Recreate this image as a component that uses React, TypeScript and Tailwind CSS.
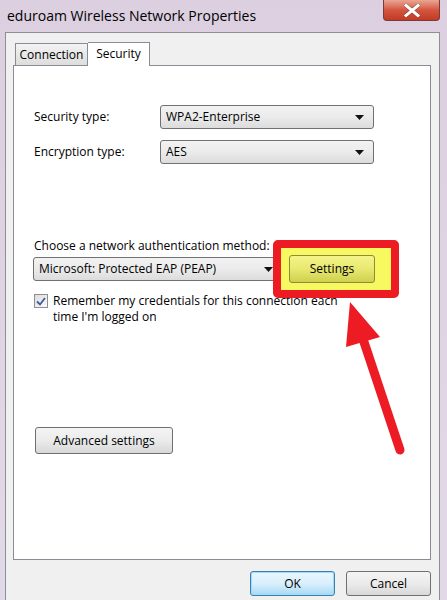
import React from "react";

const font = { fontFamily: '"Open Sans", "Noto Sans", sans-serif' };

function Combo({ value, className }: { value: string; className: string }) {
  return (
    <div
      className={`flex items-center justify-between rounded-[3px] border border-[#707070] bg-gradient-to-b from-[#f2f2f2] via-[#ebebeb] to-[#dcdcdc] pl-[5px] pr-[9px] text-[12px] text-black ${className}`}
    >
      <span className="leading-none">{value}</span>
      <svg width="9" height="5" viewBox="0 0 9 5">
        <path d="M0 0h9L4.5 5z" fill="#111" />
      </svg>
    </div>
  );
}

function Btn({ label, className }: { label: string; className: string }) {
  return (
    <div
      className={`flex items-center justify-center rounded-[3px] border border-[#707070] bg-gradient-to-b from-[#f4f4f4] via-[#ebebeb] to-[#d8d8d8] text-[12px] text-black ${className}`}
    >
      {label}
    </div>
  );
}

export default function App() {
  return (
    <div
      className="relative flex h-[600px] w-[447px] flex-col overflow-hidden bg-gradient-to-b from-[#dccfe0] to-[#e2d9e8]"
      style={font}
    >
      {/* TITLE BAR */}
      <div className="flex h-[32px] shrink-0 items-start justify-between">
        <span className="pl-[7px] pt-[6px] text-[14px] leading-[20px] text-black">
          eduroam Wireless Network Properties
        </span>
        <div className="mr-[7px] flex h-[21px] w-[57px] items-center justify-center rounded-b-[4px] border border-t-0 border-[#7a3a3a] bg-gradient-to-b from-[#e9a595] via-[#d4553f] to-[#c23a24]">
          <svg width="16" height="13" viewBox="0 0 16 13">
            <path d="M2 1.5l12 10M14 1.5l-12 10" stroke="#4a2020" strokeWidth="4.2" strokeLinecap="square" opacity="0.5" />
            <path d="M2 1.5l12 10M14 1.5l-12 10" stroke="#fff" strokeWidth="3" strokeLinecap="square" />
          </svg>
        </div>
      </div>

      {/* CLIENT AREA */}
      <div className="ml-[5px] mr-[7px] flex flex-1 flex-col border-l border-r border-t border-[#8e8e96] bg-[#f0f0f0] px-[7px]">
        {/* TABS */}
        <div className="relative z-10 mt-[9px] flex h-[23px] items-end pl-[2px]">
          <div className="flex h-[22px] w-[73px] items-center justify-center border border-b-0 border-[#898c95] bg-gradient-to-b from-[#f3f3f3] to-[#dddddd] text-[12px] text-black">
            Connection
          </div>
          <div className="-mb-px flex h-[24px] w-[62px] items-start justify-center border border-b-0 border-l-0 border-[#898c95] bg-white pt-[2px] text-[12px] text-black">
            Security
          </div>
        </div>

        {/* PANEL */}
        <div className="flex h-[495px] w-[418px] flex-col border border-[#898c95] bg-white pl-[20px] pt-[39px] text-[12px] text-black">
          <div className="flex items-center">
            <span className="w-[126px]">Security type:</span>
            <Combo value="WPA2-Enterprise" className="h-[24px] w-[214px]" />
          </div>
          <div className="mt-[11px] flex items-center">
            <span className="w-[126px]">Encryption type:</span>
            <Combo value="AES" className="h-[24px] w-[214px]" />
          </div>

          <div className="mt-[74px] leading-[16px]">Choose a network authentication method:</div>
          <div className="mt-[3px] flex items-center">
            <Combo value="Microsoft: Protected EAP (PEAP)" className="-ml-px h-[24px] w-[250px]" />
          </div>
          <div className="mt-[12px] flex items-start">
            <div className="mt-[1px] flex h-[14px] w-[14px] shrink-0 items-center justify-center border border-[#8f8f8f] bg-gradient-to-br from-[#dcdcdc] to-[#fafafa]">
              <svg width="10" height="9" viewBox="0 0 10 9">
                <path d="M1 4.5l3 3L9 1" stroke="#3c5d9b" strokeWidth="1.8" fill="none" />
              </svg>
            </div>
            <div className="ml-[5px] leading-[16px]">
              Remember my credentials for this connection each
              <br />
              time I'm logged on
            </div>
          </div>

          <Btn label="Advanced settings" className="ml-px mt-[102px] h-[27px] w-[138px]" />
        </div>

        {/* FOOTER BUTTONS */}
        <div className="flex justify-end gap-[11px] pr-[1px] pt-[11px]">
          <div className="flex h-[25px] w-[85px] items-center justify-center rounded-[3px] border border-[#3c7fb1] bg-gradient-to-b from-[#eaf6fd] via-[#d9f0fc] to-[#a7d9f5] text-[12px] text-black shadow-[inset_0_0_0_1px_#9fdcf8]">
            OK
          </div>
          <Btn label="Cancel" className="h-[25px] w-[85px]" />
        </div>
      </div>

      {/* HIGHLIGHT BOX */}
      <div className="absolute left-[273px] top-[240px] flex h-[58px] w-[126px] items-center justify-start rounded-[5px] border-[8px] border-[#ed1c24] bg-[#f8f860] pl-[8px]">
        <div className="flex h-[28px] w-[86px] items-center justify-center rounded-[3px] border border-[#8c8c3c] bg-gradient-to-b from-[#f4f48a] via-[#e8e870] to-[#cfd04e] text-[12px] text-black">
          Settings
        </div>
      </div>

      {/* ARROW */}
      <svg className="pointer-events-none absolute left-0 top-0" width="447" height="600">
        <line x1="400" y1="450" x2="364" y2="342" stroke="#ed1c24" strokeWidth="9" strokeLinecap="round" />
        <polygon points="350,302 346,347 380,337" fill="#ed1c24" />
      </svg>
    </div>
  );
}
